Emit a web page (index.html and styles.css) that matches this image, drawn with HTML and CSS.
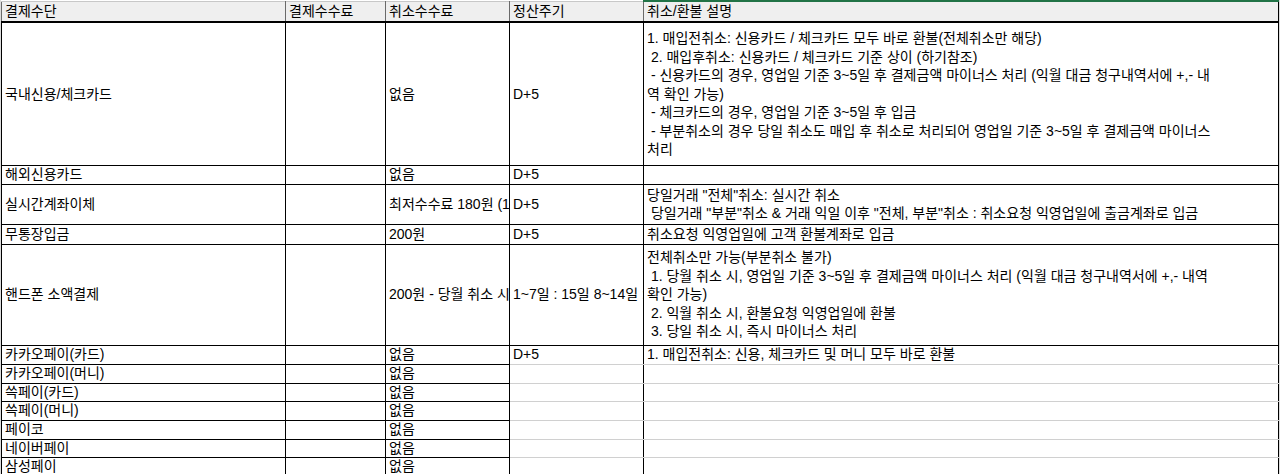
FILE: index.html
```html
<!DOCTYPE html>
<html lang="ko">
<head>
<meta charset="utf-8">
<title>결제수단</title>
<link rel="stylesheet" href="styles.css">
</head>
<body>
<table class="sheet">
  <colgroup>
    <col class="c1"><col class="c2"><col class="c3"><col class="c4"><col class="c5">
  </colgroup>
  <thead>
    <tr class="head">
      <th><div class="cell">결제수단</div></th>
      <th><div class="cell">결제수수료</div></th>
      <th><div class="cell">취소수수료</div></th>
      <th><div class="cell">정산주기</div></th>
      <th class="sel"><div class="cell">취소/환불 설명</div></th>
    </tr>
  </thead>
  <tbody>
    <tr class="r-domestic">
      <td><div class="cell">국내신용/체크카드</div></td>
      <td></td>
      <td><div class="cell">없음</div></td>
      <td><div class="cell">D+5</div></td>
      <td><div class="cell multi">1. 매입전취소: 신용카드 / 체크카드 모두 바로 환불(전체취소만 해당)
 2. 매입후취소: 신용카드 / 체크카드 기준 상이 (하기참조)
 - 신용카드의 경우, 영업일 기준 3~5일 후 결제금액 마이너스 처리 (익월 대금 청구내역서에 +,- 내
역 확인 가능)
 - 체크카드의 경우, 영업일 기준 3~5일 후 입금
 - 부분취소의 경우 당일 취소도 매입 후 취소로 처리되어 영업일 기준 3~5일 후 결제금액 마이너스
처리</div></td>
    </tr>
    <tr class="r-one">
      <td><div class="cell">해외신용카드</div></td>
      <td></td>
      <td><div class="cell">없음</div></td>
      <td><div class="cell">D+5</div></td>
      <td></td>
    </tr>
    <tr class="r-two">
      <td><div class="cell">실시간계좌이체</div></td>
      <td></td>
      <td><div class="cell">최저수수료 180원 (1.8%)</div></td>
      <td><div class="cell">D+5</div></td>
      <td><div class="cell multi">당일거래 "전체"취소: 실시간 취소
 당일거래 "부분"취소 &amp; 거래 익일 이후 "전체, 부분"취소 : 취소요청 익영업일에 출금계좌로 입금</div></td>
    </tr>
    <tr class="r-one20">
      <td><div class="cell">무통장입금</div></td>
      <td></td>
      <td><div class="cell">200원</div></td>
      <td><div class="cell">D+5</div></td>
      <td><div class="cell">취소요청 익영업일에 고객 환불계좌로 입금</div></td>
    </tr>
    <tr class="r-phone">
      <td><div class="cell">핸드폰 소액결제</div></td>
      <td></td>
      <td><div class="cell">200원 - 당월 취소 시</div></td>
      <td><div class="cell">1~7일 : 15일 8~14일 : 22일</div></td>
      <td><div class="cell multi">전체취소만 가능(부분취소 불가)
 1. 당월 취소 시, 영업일 기준 3~5일 후 결제금액 마이너스 처리 (익월 대금 청구내역서에 +,- 내역
확인 가능)
 2. 익월 취소 시, 환불요청 익영업일에 환불
 3. 당일 취소 시, 즉시 마이너스 처리</div></td>
    </tr>
    <tr class="r-small">
      <td><div class="cell">카카오페이(카드)</div></td>
      <td></td>
      <td><div class="cell">없음</div></td>
      <td class="open"><div class="cell">D+5</div></td>
      <td class="open"><div class="cell">1. 매입전취소: 신용, 체크카드 및 머니 모두 바로 환불</div></td>
    </tr>
    <tr class="r-small">
      <td><div class="cell">카카오페이(머니)</div></td>
      <td></td>
      <td><div class="cell">없음</div></td>
      <td class="open"></td>
      <td class="open"></td>
    </tr>
    <tr class="r-small18">
      <td><div class="cell">쓱페이(카드)</div></td>
      <td></td>
      <td><div class="cell">없음</div></td>
      <td class="open"></td>
      <td class="open"></td>
    </tr>
    <tr class="r-small">
      <td><div class="cell">쓱페이(머니)</div></td>
      <td></td>
      <td><div class="cell">없음</div></td>
      <td class="open"></td>
      <td class="open"></td>
    </tr>
    <tr class="r-small">
      <td><div class="cell">페이코</div></td>
      <td></td>
      <td><div class="cell">없음</div></td>
      <td class="open"></td>
      <td class="open"></td>
    </tr>
    <tr class="r-small18">
      <td><div class="cell">네이버페이</div></td>
      <td></td>
      <td><div class="cell">없음</div></td>
      <td class="open"></td>
      <td class="open"></td>
    </tr>
    <tr class="r-small">
      <td><div class="cell">삼성페이</div></td>
      <td></td>
      <td><div class="cell">없음</div></td>
      <td class="open"></td>
      <td class="open"></td>
    </tr>
  </tbody>
</table>
</body>
</html>
```
FILE: styles.css
```css
html, body {
  margin: 0;
  padding: 0;
  background: #dcdcdc;
}

body {
  font-family: "Liberation Sans", "Noto Sans CJK KR", sans-serif;
  font-size: 14px;
  color: #000;
  overflow: hidden;
}

.sheet {
  margin-left: 1px;
  width: 1277px;
  table-layout: fixed;
  border-collapse: collapse;
  background: #fff;
}

.c1 { width: 284px; }
.c2 { width: 100px; }
.c3 { width: 124px; }
.c4 { width: 134px; }
.c5 { width: 635px; }

th, td {
  padding: 0;
  border: 1px solid #000;
  vertical-align: middle;
  text-align: left;
  font-weight: normal;
}

.cell {
  padding: 0 3px;
  white-space: nowrap;
  overflow: hidden;
  line-height: 18.5px;
}

.multi {
  white-space: pre;
}

.head th {
  background: #efefef;
  height: 19px;
  border-top: 1px solid #c8c8c8;
  border-left: 1px solid #6a6a6a;
  border-right: 1px solid #6a6a6a;
  border-bottom: 2px solid #000;
}

.head th.sel {
  border-top: 2px solid #217346;
  border-right: 1px solid #000;
}

.r-domestic { height: 143px; }
.r-one { height: 19px; }
.r-one20 { height: 20px; }
.r-two { height: 40px; }
.r-phone { height: 101px; }
.r-small { height: 19px; }
.r-small18 { height: 18px; }

.r-small .cell, .r-small18 .cell, .r-one .cell, .r-one20 .cell {
  line-height: 17px;
}

td.open {
  border-top: 1px solid #d0d0d0;
  border-bottom: 1px solid #d0d0d0;
}

.r-small:first-of-type td.open {
  border-top: 1px solid #000;
}

tbody tr:nth-child(6) td.open {
  border-top: 1px solid #000;
}
```
